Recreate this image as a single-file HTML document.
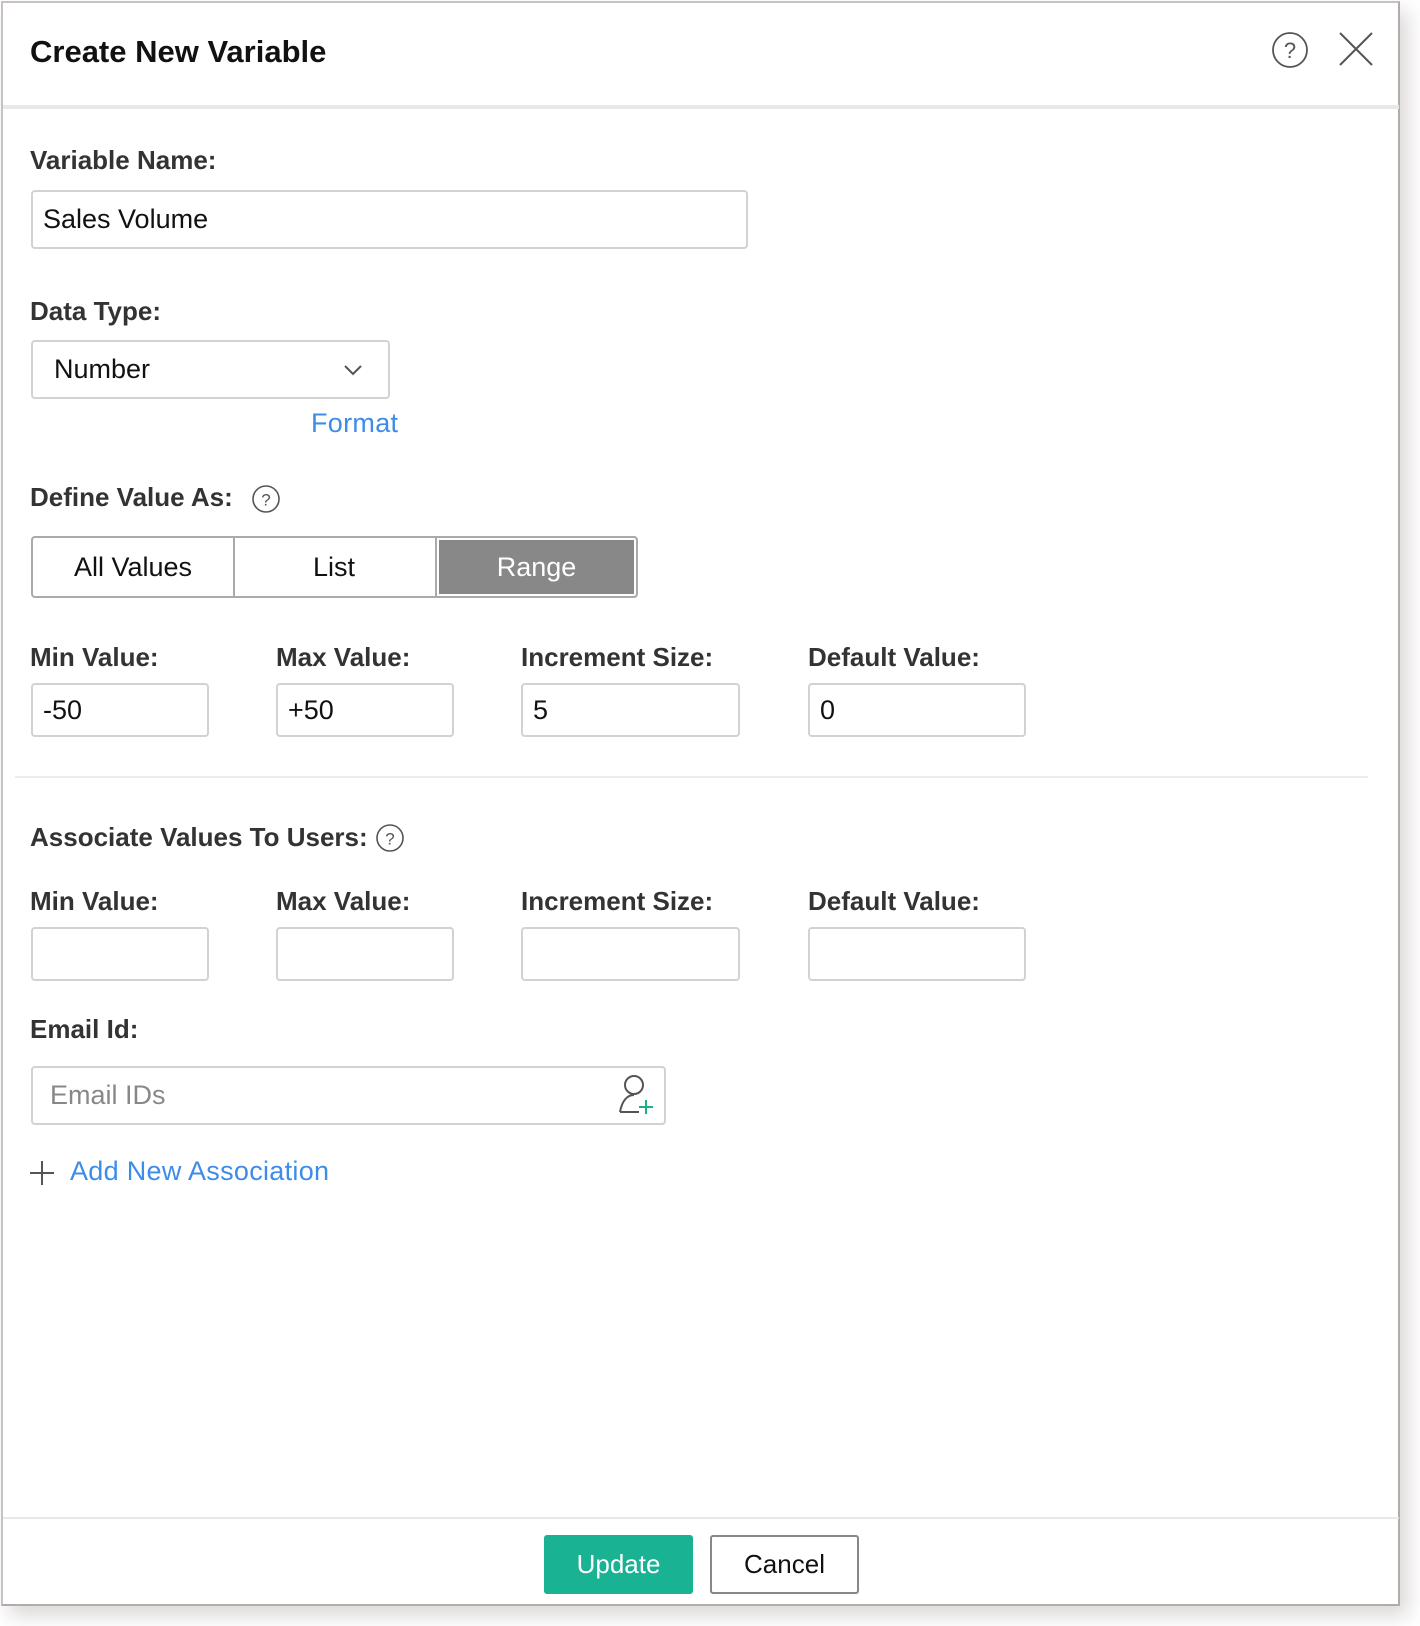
<!DOCTYPE html>
<html><head><meta charset="utf-8"><style>
*{box-sizing:border-box;margin:0;padding:0}
body{width:1420px;height:1626px;background:#fff;font-family:"Liberation Sans",sans-serif;position:relative;overflow:hidden}
#dlg{position:absolute;left:1px;top:1px;width:1399px;height:1605px;border:2px solid #b3abab;border-top-color:#c8c2c2;border-left-color:#c8c2c2;background:#fff;box-shadow:8px 10px 18px rgba(120,100,100,.25)}
.a{position:absolute;white-space:nowrap}
.lbl{font-size:26px;font-weight:bold;color:#333;letter-spacing:0}
.inp{position:absolute;border:2px solid #d2d2d2;border-radius:4px;background:#fff;font-size:27px;color:#111;padding-left:10px;display:flex;align-items:center}
.seg{position:absolute;top:536px;height:62px;border:2px solid #aaa;display:flex;align-items:center;justify-content:center;font-size:27px;color:#111}
.blue{color:#3c8ce8;letter-spacing:0.3px}
</style></head><body>
<div id="dlg"></div>
<div class="a" style="left:30px;top:34px;font-size:31px;font-weight:bold;color:#111;letter-spacing:0">Create New Variable</div>
<svg class="a" style="left:1271px;top:31px" width="38" height="38"><circle cx="19" cy="19" r="17" fill="none" stroke="#555" stroke-width="1.8"/><text x="19" y="27" font-size="22" text-anchor="middle" fill="#555" font-family="Liberation Sans">?</text></svg>
<svg class="a" style="left:1338px;top:31px" width="36" height="36"><path d="M2 2L34 34M34 2L2 34" stroke="#555" stroke-width="2"/></svg>
<div class="a" style="left:3px;top:105px;width:1396px;height:4px;background:#e8e8e8"></div>

<div class="a lbl" style="left:30px;top:145px">Variable Name:</div>
<div class="inp" style="left:31px;top:190px;width:717px;height:59px">Sales Volume</div>

<div class="a lbl" style="left:30px;top:296px">Data Type:</div>
<div class="inp" style="left:31px;top:340px;width:359px;height:59px;padding-left:21px">Number</div>
<svg class="a" style="left:343px;top:363px" width="20" height="14"><path d="M2 3L10 11L18 3" fill="none" stroke="#555" stroke-width="2"/></svg>
<div class="a blue" style="left:311px;top:408px;font-size:27px">Format</div>

<div class="a lbl" style="left:30px;top:482px">Define Value As:</div>
<svg class="a" style="left:251px;top:484px" width="30" height="30"><circle cx="15" cy="15" r="13" fill="none" stroke="#555" stroke-width="1.6"/><text x="15" y="21.5" font-size="17" text-anchor="middle" fill="#555" font-family="Liberation Sans">?</text></svg>
<div class="seg" style="left:31px;width:204px;border-radius:4px 0 0 4px">All Values</div>
<div class="seg" style="left:233px;width:204px;border-left:none">List</div>
<div class="seg" style="left:435px;width:203px;border-radius:0 4px 4px 0;background:#888;color:#fff;box-shadow:inset 0 0 0 2px #fff">Range</div>

<div class="a lbl" style="left:30px;top:642px">Min Value:</div>
<div class="a lbl" style="left:276px;top:642px">Max Value:</div>
<div class="a lbl" style="left:521px;top:642px">Increment Size:</div>
<div class="a lbl" style="left:808px;top:642px">Default Value:</div>
<div class="inp" style="left:31px;top:683px;width:178px;height:54px">-50</div>
<div class="inp" style="left:276px;top:683px;width:178px;height:54px">+50</div>
<div class="inp" style="left:521px;top:683px;width:219px;height:54px">5</div>
<div class="inp" style="left:808px;top:683px;width:218px;height:54px">0</div>

<div class="a" style="left:15px;top:776px;width:1353px;height:2px;background:#ececec"></div>

<div class="a lbl" style="left:30px;top:822px">Associate Values To Users:</div>
<svg class="a" style="left:375px;top:823px" width="30" height="30"><circle cx="15" cy="15" r="13" fill="none" stroke="#555" stroke-width="1.6"/><text x="15" y="21.5" font-size="17" text-anchor="middle" fill="#555" font-family="Liberation Sans">?</text></svg>

<div class="a lbl" style="left:30px;top:886px">Min Value:</div>
<div class="a lbl" style="left:276px;top:886px">Max Value:</div>
<div class="a lbl" style="left:521px;top:886px">Increment Size:</div>
<div class="a lbl" style="left:808px;top:886px">Default Value:</div>
<div class="inp" style="left:31px;top:927px;width:178px;height:54px"></div>
<div class="inp" style="left:276px;top:927px;width:178px;height:54px"></div>
<div class="inp" style="left:521px;top:927px;width:219px;height:54px"></div>
<div class="inp" style="left:808px;top:927px;width:218px;height:54px"></div>

<div class="a lbl" style="left:30px;top:1014px">Email Id:</div>
<div class="inp" style="left:31px;top:1066px;width:635px;height:59px;padding-left:17px;color:#888">Email IDs</div>
<svg class="a" style="left:617px;top:1073px" width="40" height="44"><circle cx="17" cy="12" r="9" fill="none" stroke="#555" stroke-width="2"/><path d="M3 39C5 28 10 22 17 22M3 39H22" fill="none" stroke="#555" stroke-width="2"/><path d="M29 27V41M22 34H36" stroke="#1aae8a" stroke-width="2"/></svg>

<svg class="a" style="left:29px;top:1160px" width="26" height="26"><path d="M13 1V25M1 13H25" stroke="#555" stroke-width="2"/></svg>
<div class="a blue" style="left:70px;top:1156px;font-size:27px">Add New Association</div>

<div class="a" style="left:3px;top:1517px;width:1396px;height:2px;background:#e8e8e8"></div>
<div class="a" style="left:544px;top:1535px;width:149px;height:59px;background:#19b394;border-radius:3px;color:#fff;font-size:26px;display:flex;align-items:center;justify-content:center">Update</div>
<div class="a" style="left:710px;top:1535px;width:149px;height:59px;border:2px solid #888;border-radius:3px;color:#111;font-size:26px;display:flex;align-items:center;justify-content:center">Cancel</div>
</body></html>
